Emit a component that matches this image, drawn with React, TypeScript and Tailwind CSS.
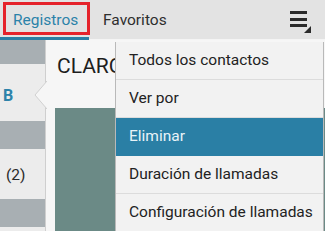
import React from "react";

const menuItems = [
  "Todos los contactos",
  "Ver por",
  "Eliminar",
  "Duración de llamadas",
  "Configuración de llamadas",
];

function OverflowIcon() {
  return (
    <svg width="24" height="26" viewBox="0 0 24 26">
      <rect x="2" y="3" width="17" height="3" fill="#2b2b2b" />
      <rect x="2" y="10" width="17" height="3" fill="#2b2b2b" />
      <rect x="2" y="16" width="17" height="3" fill="#2b2b2b" />
      <polygon points="23,18 23,25 16,25" fill="#2b2b2b" />
    </svg>
  );
}

export default function App() {
  return (
    <div
      className="relative w-[325px] h-[231px] overflow-hidden bg-[#f0f0f0]"
      style={{ fontFamily: "Roboto, 'Liberation Sans', sans-serif" }}
    >
      {/* Tabs bar */}
      <div className="flex items-center h-[40px] bg-[#e3e3e3] border-b border-[#f4f4f4]">
        <div className="relative h-full w-[89px]">
          <div className="absolute left-[3px] top-[2px] w-[87px] h-[33px] border-[3px] border-[#e5232b]" />
          <div className="flex h-[37px] items-center pl-[13px] pt-[4px] text-[15.5px] text-[#2b82a9]">
            Registros
          </div>
          <div className="h-[3px] bg-[#2b7ea4]" />
        </div>
        <div className="ml-[14px] pt-[2px] text-[15.5px] text-[#2e2e2e]">Favoritos</div>
        <div className="ml-auto mr-[13px] mt-[3px]">
          <OverflowIcon />
        </div>
      </div>

      <div className="flex h-[191px]">
        {/* Left list */}
        <div className="w-[46px] flex flex-col border-r border-[#cfcfcf] shadow-[1px_0_2px_rgba(0,0,0,0.15)]">
          <div className="h-[24px] bg-[#a8afb3]" />
          <div className="h-[57px] bg-[#ececec] flex items-center pl-[3px] pt-[7px] text-[16px] font-bold text-[#2d83aa]">
            B
          </div>
          <div className="h-[28px] bg-[#a8afb3]" />
          <div className="h-[50px] bg-[#ececec] flex items-center pl-[6px] pt-[4px] text-[15.5px] text-[#2a2a2a]">
            (2)
          </div>
          <div className="h-[28px] bg-[#a8afb3]" />
          <div className="flex-1 bg-[#ececec]" />
        </div>

        {/* Detail panel */}
        <div className="relative flex-1 bg-[#f6f6f6] flex flex-col">
          <svg
            className="absolute left-[-12px] top-[41px]"
            width="13"
            height="28"
            viewBox="0 0 13 28"
          >
            <polygon points="13,0 1,14 13,28" fill="#f6f6f6" />
            <polyline points="13,0 1,14 13,28" fill="none" stroke="#d0d0d0" strokeWidth="1" />
          </svg>
          <div className="pl-[11px] pt-[16px] text-[21px] text-[#1e1e1e] leading-none">CLARO</div>
          <div className="ml-[9px] mt-[31px] flex-1 bg-[#6b8a86]" />
        </div>
      </div>

      {/* Overflow menu */}
      <div className="absolute left-[115px] top-[42px] w-[209px] bg-[#f2f2f2] border-l border-r border-[#b9b9b9]">
        {menuItems.map((item) => (
          <div
            key={item}
            className={`h-[38px] flex items-center pl-[13px] text-[15.5px] ${
              item === "Eliminar"
                ? "bg-[#2a7fa5] text-[#e8f3f8]"
                : "text-[#222] border-b border-[#dcdcdc]"
            }`}
          >
            {item}
          </div>
        ))}
      </div>
    </div>
  );
}
